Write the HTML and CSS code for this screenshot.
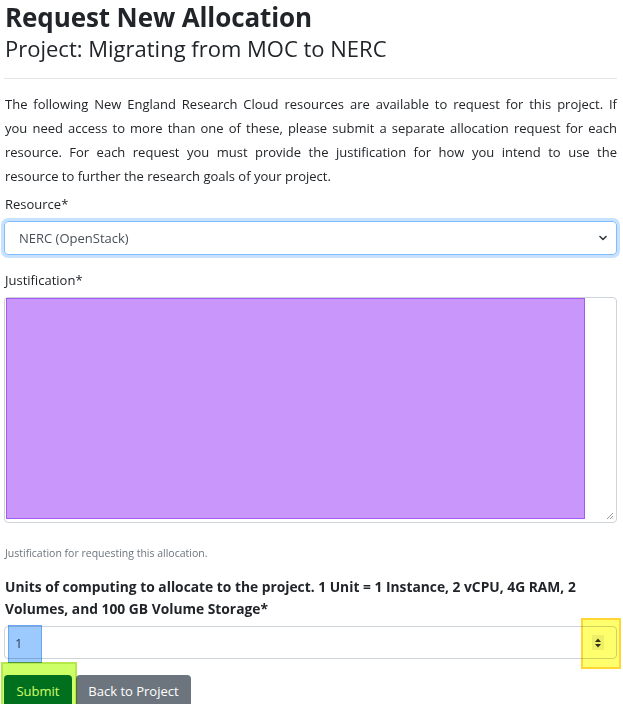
FILE: index.html
```html
<!DOCTYPE html>
<html lang="en">
<head>
<meta charset="utf-8">
<title>Request New Allocation</title>
<link rel="stylesheet" href="styles.css">
</head>
<body>
<div class="page">
  <h1 class="title">Request New Allocation</h1>
  <h2 class="subtitle">Project: Migrating from MOC to NERC</h2>
  <hr class="rule">
  <p class="intro"><span class="line">The following New England Research Cloud resources are available to request for this project. If</span> <span class="line">you need access to more than one of these, please submit a separate allocation request for each</span> <span class="line">resource. For each request you must provide the justification for how you intend to use the</span> <span class="line last">resource to further the research goals of your project.</span></p>
  <form class="form">
    <div class="group">
      <label class="label">Resource*</label>
      <div class="select">
        <span>NERC (OpenStack)</span>
        <svg class="chevron" width="8" height="6" viewBox="0 0 8 6"><path d="M1 1.5 L4 4.5 L7 1.5" fill="none" stroke="#343a40" stroke-width="1.6" stroke-linecap="round" stroke-linejoin="round"/></svg>
      </div>
    </div>
    <div class="group group-just">
      <label class="label">Justification*</label>
      <div class="textarea">
        <div class="hl hl-purple"></div>
        <svg class="grip" width="8" height="8" viewBox="0 0 8 8"><path d="M7 1 L1 7 M7 4 L4 7 M7 6.5 L6.5 7" stroke="#999" stroke-width="1"/></svg>
      </div>
      <small class="help">Justification for requesting this allocation.</small>
    </div>
    <div class="group">
      <label class="label label-bold">Units of computing to allocate to the project. 1 Unit = 1 Instance, 2 vCPU, 4G RAM, 2 Volumes, and 100 GB Volume Storage*</label>
      <div class="number">
        <span class="number-value">1</span>
        <span class="spinner">
          <svg width="8" height="12" viewBox="0 0 8 12"><path d="M4 1.5 L7 5 L1 5 Z M4 10.5 L7 7 L1 7 Z" fill="#333"/></svg>
        </span>
        <div class="hl hl-blue"></div>
        <div class="hl hl-yellow"></div>
      </div>
    </div>
    <div class="buttons">
      <button type="button" class="btn btn-submit">Submit</button>
      <button type="button" class="btn btn-back">Back to Project</button>
      <div class="hl hl-lime"></div>
    </div>
  </form>
</div>
</body>
</html>
```

FILE: styles.css
```css
* { box-sizing: border-box; }
html, body { margin: 0; padding: 0; background: #fff; }
body {
  font-family: "Open Sans", "Noto Sans", sans-serif;
  color: #212529;
  font-size: 13px;
  overflow: hidden;
}
.page { padding: 0 6px 0 4px; width: 623px; }
.title {
  font-size: 26px;
  font-weight: 700;
  line-height: 34px;
  margin: 0 0 0 1px;
  letter-spacing: -0.1px;
}
.subtitle {
  font-size: 22px;
  font-weight: 400;
  line-height: 30px;
  margin: -1px 0 0 1px;
}
.rule {
  border: 0;
  border-top: 1px solid #e6e6e6;
  margin: 15px 0 0 0;
  height: 0;
}
.intro {
  margin: 13px 0 0 1px;
  line-height: 24px;
  text-align: justify;
}
.line { display: block; text-align: justify; text-align-last: justify; }
.line.last { text-align-last: left; }
.form { margin-top: 6px; }
.group { margin-bottom: 15px; position: relative; }
.label {
  display: block;
  line-height: 20px;
  margin: 0 0 7px 1px;
}
.label-bold { font-weight: 700; font-size: 13.8px; line-height: 22px; margin-bottom: 6px; }
.select {
  height: 34px;
  border: 1px solid #80bdff;
  border-radius: 4px;
  box-shadow: 0 0 0 3px rgba(0, 123, 255, 0.22);
  display: flex;
  align-items: center;
  justify-content: space-between;
  padding: 0 9px 0 14px;
  color: #495057;
}
.chevron { display: block; }
.group-just { margin-bottom: 15px; }
.textarea {
  position: relative;
  height: 226px;
  border: 1px solid #ced4da;
  border-radius: 4px;
}
.grip { position: absolute; right: 2px; bottom: 2px; }
.help {
  display: block;
  margin-top: 22px;
  font-size: 10.5px;
  line-height: 16px;
  color: #6c757d;
  margin-left: 1px;
}
.number {
  position: relative;
  height: 33px;
  border: 1px solid #ced4da;
  border-radius: 4px;
  display: flex;
  align-items: center;
  justify-content: space-between;
  padding: 0 12px 0 10px;
  color: #495057;
}
.spinner {
  display: flex;
  align-items: center;
  justify-content: center;
  width: 12px;
  height: 15px;
  background: #eee;
}
.spinner svg { display: block; }
.buttons { position: relative; display: flex; gap: 4px; margin-top: 16px; }
.btn {
  font-family: inherit;
  font-size: 13px;
  line-height: 20px;
  padding: 6px 10px 12px;
  border: 0;
  border-radius: 4px 4px 0 0;
  color: #fff;
}
.btn-submit { background: #00704c; width: 68px; }
.btn-back { background: #6c757d; width: 115px; }
.hl { position: absolute; mix-blend-mode: multiply; pointer-events: none; }
.hl-purple {
  left: 1px; top: 0; width: 579px; height: 221px;
  background: #c996fb;
  border: 1px solid #a35cef;
}
.hl-blue {
  left: 3px; top: -2px; width: 34px; height: 38px;
  background: #9ccaff;
  border: 1px solid #6aa8f5;
}
.hl-yellow {
  left: 576px; top: -9px; width: 40px; height: 51px;
  background: #ffff6e;
  border: 2px solid #ffd633;
}
.hl-lime {
  left: -3px; top: -13px; width: 76px; height: 60px;
  background: #cdff66;
  border: 2px solid #b5e84a;
}
```
